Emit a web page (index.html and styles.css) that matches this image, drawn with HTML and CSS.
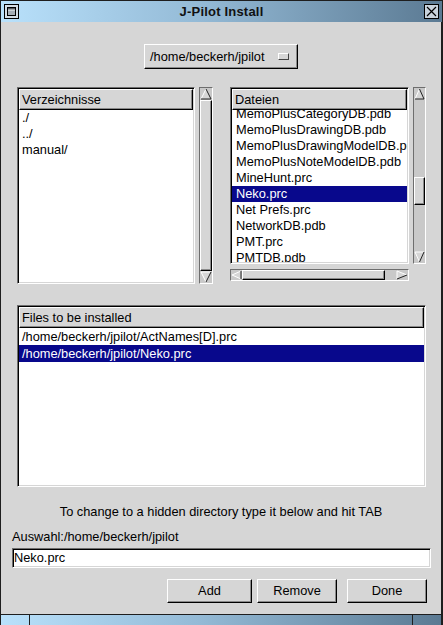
FILE: index.html
```html
<!DOCTYPE html>
<html>
<head>
<meta charset="utf-8">
<title>J-Pilot Install</title>
<link rel="stylesheet" href="styles.css">
</head>
<body>
<div class="window">
  <div class="titlebar">
    <span class="tb-btn">
      <svg width="15" height="15" viewBox="0 0 15 15"><rect x="0.5" y="0.5" width="14" height="14" fill="#d4dde5" stroke="#000"/><rect x="3.5" y="3.5" width="8" height="8" fill="#a6aeb6" stroke="#000"/><line x1="4" y1="5" x2="11" y2="5" stroke="#000"/><line x1="4" y1="6" x2="11" y2="6" stroke="#eef2f5"/></svg>
    </span>
    <span class="title">J-Pilot Install</span>
    <span class="tb-btn">
      <svg width="15" height="15" viewBox="0 0 15 15"><rect x="0.5" y="0.5" width="14" height="14" fill="#c9d3dc" stroke="#000"/><path d="M3 3L12 12M12 3L3 12" stroke="#000" stroke-width="1.2"/></svg>
    </span>
  </div>

  <div class="content">
    <div class="dir-row">
      <div class="dir-btn raised"><span>/home/beckerh/jpilot</span><span class="indicator"></span></div>
    </div>

    <div class="lists">
      <div class="left-col">
        <div class="sunken list dirlist">
          <div class="hdr raised">Verzeichnisse</div>
          <div class="items">
            <div class="item">./</div>
            <div class="item">../</div>
            <div class="item">manual/</div>
          </div>
        </div>
        <div class="vscroll full">
          <span class="arrow"><svg width="12" height="12" viewBox="0 0 12 12"><polygon points="6,1 11,11 1,11" fill="#d6d6d6"/><polyline points="1,11 6,1" stroke="#fff" fill="none"/><polyline points="6,1 11,11 1,11" stroke="#222" fill="none"/></svg></span>
          <span class="thumb grow"></span>
          <span class="arrow"><svg width="12" height="12" viewBox="0 0 12 12"><polygon points="1,1 11,1 6,11" fill="#d6d6d6"/><polyline points="6,11 1,1 11,1" stroke="#fff" fill="none"/><polyline points="11,1 6,11" stroke="#222" fill="none"/></svg></span>
        </div>
      </div>

      <div class="right-col">
        <div class="sunken list filelist">
          <div class="hdr raised">Dateien</div>
          <div class="items">
            <div class="item first">MemoPlusCategoryDB.pdb</div>
            <div class="item">MemoPlusDrawingDB.pdb</div>
            <div class="item">MemoPlusDrawingModelDB.pdb</div>
            <div class="item">MemoPlusNoteModelDB.pdb</div>
            <div class="item">MineHunt.prc</div>
            <div class="item sel">Neko.prc</div>
            <div class="item">Net Prefs.prc</div>
            <div class="item">NetworkDB.pdb</div>
            <div class="item">PMT.prc</div>
            <div class="item">PMTDB.pdb</div>
          </div>
        </div>
        <div class="vscroll part">
          <span class="arrow"><svg width="11" height="12" viewBox="0 0 11 12"><polygon points="5.5,1 10,11 1,11" fill="#d6d6d6"/><polyline points="1,11 5.5,1" stroke="#fff" fill="none"/><polyline points="5.5,1 10,11 1,11" stroke="#222" fill="none"/></svg></span>
          <span class="gap-a"></span>
          <span class="thumb vthumb"></span>
          <span class="gap-b"></span>
          <span class="arrow"><svg width="11" height="12" viewBox="0 0 11 12"><polygon points="1,1 10,1 5.5,11" fill="#d6d6d6"/><polyline points="5.5,11 1,1 10,1" stroke="#fff" fill="none"/><polyline points="10,1 5.5,11" stroke="#222" fill="none"/></svg></span>
        </div>
        <div class="hscroll">
          <span class="harrow"><svg width="11" height="10" viewBox="0 0 11 10"><polygon points="1,5 10,1 10,9" fill="#d6d6d6"/><polyline points="10,1 1,5 10,9" stroke="#fff" fill="none"/><polyline points="10,1 10,9" stroke="#222" fill="none"/></svg></span>
          <span class="thumb hthumb"></span>
          <span class="hgap"></span>
          <span class="harrow r"><svg width="12" height="10" viewBox="0 0 12 10"><polygon points="1,1 11,5 1,9" fill="#d6d6d6"/><polyline points="1,9 1,1 11,5" stroke="#fff" fill="none"/><polyline points="11,5 1,9" stroke="#222" fill="none"/></svg></span>
        </div>
      </div>
    </div>

    <div class="sunken list install">
      <div class="hdr raised">Files to be installed</div>
      <div class="items">
        <div class="item">/home/beckerh/jpilot/ActNames[D].prc</div>
        <div class="item sel">/home/beckerh/jpilot/Neko.prc</div>
      </div>
    </div>

    <div class="hint">To change to a hidden directory type it below and hit TAB</div>
    <div class="label">Auswahl:/home/beckerh/jpilot</div>
    <div class="sunken entry">Neko.prc</div>

    <div class="buttons">
      <div class="btn raised add">Add</div>
      <div class="btn raised remove">Remove</div>
      <div class="btn raised done">Done</div>
    </div>
  </div>

  <div class="bottombar">
    <span class="seg s1"></span>
    <span class="seg s2"></span>
    <span class="seg s3"></span>
  </div>
</div>
</body>
</html>
```

FILE: styles.css
```css
* { box-sizing: border-box; }
html, body { margin: 0; padding: 0; }
body {
  width: 443px;
  height: 625px;
  overflow: hidden;
  font-family: "Liberation Sans", Arial, sans-serif;
  font-size: 12.8px;
  color: #000;
  background: #d6d6d6;
}
.window {
  width: 443px;
  height: 625px;
  display: flex;
  flex-direction: column;
}

/* title bar */
.titlebar {
  height: 22px;
  flex: none;
  display: grid;
  grid-template-columns: 15px 1fr 15px;
  align-items: center;
  padding: 0 3px;
  border: 1px solid #1e1e1e;
  border-bottom: none;
  background: linear-gradient(to right, #b9e1fb 0%, #94bad6 45%, #5b7a93 100%);
}
.title {
  text-align: center;
  font-weight: bold;
  font-size: 13px;
  color: #111;
  letter-spacing: 0.2px;
}
.tb-btn { width: 15px; height: 15px; display: block; }
.tb-btn svg { display: block; }

.content {
  flex: 1;
  display: flex;
  flex-direction: column;
  border-left: 1px solid #1e1e1e;
  border-right: 2px solid #1e1e1e;
  background: #d6d6d6;
}

/* bevels */
.raised {
  background: #d6d6d6;
  border: 1px solid;
  border-color: #fff #000 #000 #fff;
  box-shadow: inset -1px -1px 0 #8a8a8a;
}
.sunken {
  border: 1px solid;
  border-color: #6e6e6e #fff #fff #6e6e6e;
  padding: 1px;
  background: #fff;
  box-shadow: inset 1px 1px 0 #000, inset -1px -1px 0 #d6d6d6;
}

/* directory option button */
.dir-row {
  margin-top: 22px;
  display: flex;
  justify-content: center;
}
.dir-btn {
  width: 154px;
  height: 25px;
  display: flex;
  align-items: center;
  justify-content: space-between;
  padding: 0 8px 0 5px;
  white-space: nowrap;
}
.indicator {
  width: 11px;
  height: 7px;
  flex: none;
  border: 1px solid;
  border-color: #fff #444 #444 #fff;
  background: #d6d6d6;
}

/* lists row */
.lists {
  display: flex;
  align-items: flex-start;
  margin-top: 18px;
  margin-left: 16px;
}
.left-col {
  display: flex;
  gap: 4px;
  height: 197px;
}
.dirlist { width: 178px; height: 197px; }
.right-col {
  margin-left: 17px;
  display: grid;
  grid-template-columns: 179px 13px;
  column-gap: 4px;
  row-gap: 5px;
}
.filelist { width: 179px; height: 177px; }

.list {
  display: flex;
  flex-direction: column;
  overflow: hidden;
}
.hdr {
  height: 21px;
  flex: none;
  padding-left: 2px;
  line-height: 19px;
  white-space: nowrap;
}
.items {
  flex: 1;
  overflow: hidden;
}
.item {
  height: 16px;
  line-height: 16px;
  padding-left: 3px;
  white-space: nowrap;
}
.filelist .item { padding-left: 4px; }
.item.sel { background: #08088c; color: #fff; }
.filelist .item.first { margin-top: -4px; }

/* scrollbars */
.vscroll {
  display: flex;
  flex-direction: column;
  border: 1px solid;
  border-color: #6e6e6e #fff #fff #6e6e6e;
  background: #c9c9c9;
}
.vscroll.full { width: 14px; height: 197px; }
.vscroll.part { width: 13px; height: 177px; }
.arrow { height: 12px; flex: none; display: block; }
.arrow svg { display: block; }
.thumb {
  display: block;
  background: #d6d6d6;
  border: 1px solid;
  border-color: #fff #000 #000 #fff;
  box-shadow: inset -1px -1px 0 #8a8a8a;
}
.thumb.grow { flex: 1; }
.gap-a { height: 77px; flex: none; }
.vthumb { height: 28px; flex: none; }
.gap-b { flex: 1; }

.hscroll {
  width: 179px;
  height: 12px;
  display: flex;
  border: 1px solid;
  border-color: #6e6e6e #fff #fff #6e6e6e;
  background: #c9c9c9;
}
.harrow { width: 11px; flex: none; display: block; }
.harrow.r { width: 12px; }
.harrow svg { display: block; }
.hthumb { width: 143px; flex: none; }
.hgap { flex: 1; }

/* install list */
.install {
  margin-top: 21px;
  margin-left: 16px;
  width: 409px;
  height: 182px;
}
.install .item { height: 17px; line-height: 17px; }

.hint {
  margin-top: 17px;
  text-align: center;
  line-height: 16px;
}
.label {
  margin-top: 9px;
  margin-left: 11px;
  line-height: 16px;
}
.entry {
  margin-top: 3px;
  margin-left: 11px;
  width: 419px;
  height: 20px;
  line-height: 16px;
}

.buttons {
  margin-top: 11px;
  margin-left: 166px;
  display: flex;
}
.btn {
  height: 24px;
  line-height: 22px;
  text-align: center;
}
.add { width: 85px; }
.remove { width: 80px; margin-left: 5px; }
.done { width: 80px; margin-left: 10px; }

/* bottom frame */
.bottombar {
  height: 11px;
  flex: none;
  display: flex;
  border-top: 1px solid #1e1e1e;
  border-left: 1px solid #1e1e1e;
  border-right: 2px solid #1e1e1e;
  background: linear-gradient(to right, #b9e1fb 0%, #94bad6 45%, #5b7a93 100%);
}
.seg { display: block; height: 100%; }
.s1 { width: 29px; border-right: 1px solid #1e1e1e; }
.s2 { flex: 1; border-right: 1px solid #1e1e1e; }
.s3 { width: 28px; }
```
